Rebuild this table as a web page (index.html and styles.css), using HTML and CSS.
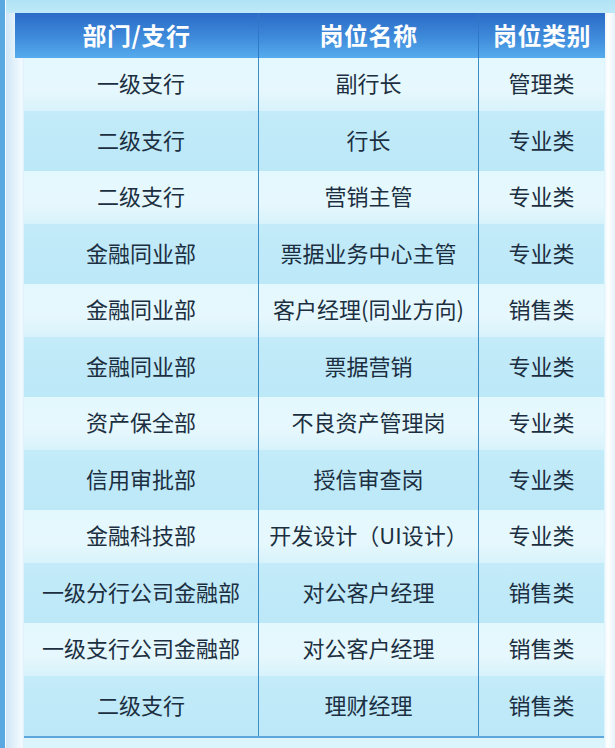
FILE: index.html
```html
<!DOCTYPE html>
<html lang="zh-CN">
<head>
<meta charset="utf-8">
<link rel="stylesheet" href="styles.css">
</head>
<body>
<div class="page">
  <div class="topband"></div>
  <div class="head">
    <div class="hc">部门/支行</div>
    <div class="hc div">岗位名称</div>
    <div class="hc div">岗位类别</div>
  </div>
  <div class="body">
    <div class="row light"><div class="c">一级支行</div><div class="c div">副行长</div><div class="c div">管理类</div></div>
    <div class="row dark"><div class="c">二级支行</div><div class="c div">行长</div><div class="c div">专业类</div></div>
    <div class="row light"><div class="c">二级支行</div><div class="c div">营销主管</div><div class="c div">专业类</div></div>
    <div class="row dark"><div class="c">金融同业部</div><div class="c div">票据业务中心主管</div><div class="c div">专业类</div></div>
    <div class="row light"><div class="c">金融同业部</div><div class="c div">客户经理(同业方向)</div><div class="c div">销售类</div></div>
    <div class="row dark"><div class="c">金融同业部</div><div class="c div">票据营销</div><div class="c div">专业类</div></div>
    <div class="row light"><div class="c">资产保全部</div><div class="c div">不良资产管理岗</div><div class="c div">专业类</div></div>
    <div class="row dark"><div class="c">信用审批部</div><div class="c div">授信审查岗</div><div class="c div">专业类</div></div>
    <div class="row light"><div class="c">金融科技部</div><div class="c div">开发设计（UI设计）</div><div class="c div">专业类</div></div>
    <div class="row dark"><div class="c">一级分行公司金融部</div><div class="c div">对公客户经理</div><div class="c div">销售类</div></div>
    <div class="row light"><div class="c">一级支行公司金融部</div><div class="c div">对公客户经理</div><div class="c div">销售类</div></div>
    <div class="row dark"><div class="c">二级支行</div><div class="c div">理财经理</div><div class="c div">销售类</div></div>
  </div>
</div>
</body>
</html>
```
FILE: styles.css
```css
html, body {
  margin: 0;
  padding: 0;
}
body {
  width: 615px;
  height: 748px;
  overflow: hidden;
  font-family: "Noto Sans CJK SC", "Noto Sans", sans-serif;
  background:
    linear-gradient(90deg,
      #5aa8e2 0, #5aa8e2 5px,
      #f4fbff 5px, #f4fbff 6px,
      #cfe6f6 6px, #e2f1fb 14px, #f3faff 22px, #dbeffa 24px,
      #dcf4fc 24px, #dcf4fc 605px,
      #eef7fc 605px, #ffffff 608px, #e6f2f9 615px);
}
.page {
  position: relative;
  height: 748px;
}
.topband {
  height: 13px;
  margin-left: 6px;
  background: linear-gradient(180deg, #b0e3f5, #bfe9f8);
}
.head {
  margin-left: 15px;
  width: 590px;
  height: 45px;
  display: grid;
  grid-template-columns: 243px 220px 1fr;
  background: linear-gradient(180deg, #2a6bc6 0%, #3f8bdb 55%, #55aced 100%);
}
.hc {
  display: flex;
  align-items: center;
  justify-content: center;
  color: #ffffff;
  font-size: 24px;
  font-weight: 700;
  letter-spacing: 0.5px;
  padding-bottom: 2px;
}
.hc.div {
  border-left: 1px solid #2f78c8;
}
.body {
  margin-left: 24px;
  width: 580px;
  border-bottom: 2px solid #5ea6dc;
}
.row {
  display: grid;
  grid-template-columns: 234px 220px 1fr;
}
.row.light {
  height: 53px;
  background: linear-gradient(180deg, #e3f8fd 0%, #e6f8fd 60%, #d8f2fb 100%);
}
.row.dark {
  height: 60px;
  background: linear-gradient(180deg, #c3ebf9 0%, #bce8f8 100%);
}
.c {
  display: flex;
  align-items: center;
  justify-content: center;
  font-size: 22px;
  font-weight: 400;
  color: #1c2f41;
  padding-bottom: 5px;
}
.c.div {
  border-left: 1px solid #3e8fc6;
}
```
